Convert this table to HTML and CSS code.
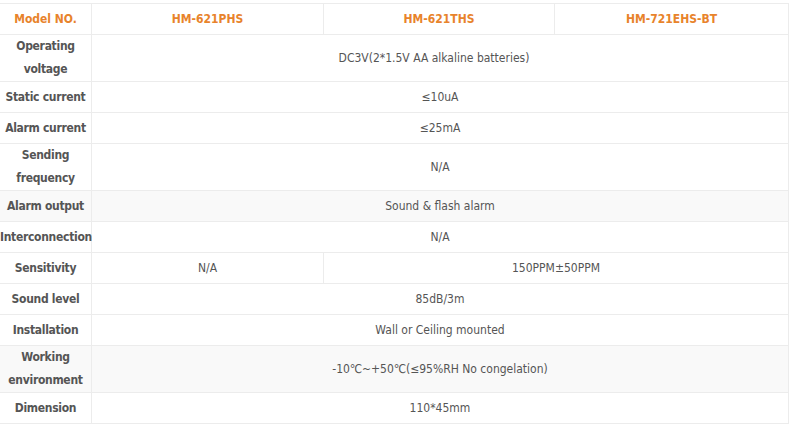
FILE: index.html
```html
<!DOCTYPE html>
<html>
<head>
<meta charset="utf-8">
<link rel="stylesheet" href="styles.css">
</head>
<body>
<div class="wrap">
<table class="spec">
  <colgroup>
    <col class="c1"><col class="c2"><col class="c3"><col class="c4">
  </colgroup>
  <tr class="head">
    <td>Model NO.</td><td>HM-621PHS</td><td>HM-621THS</td><td>HM-721EHS-BT</td>
  </tr>
  <tr><th>Operating<br>voltage</th><td colspan="3"><span class="trail">DC3V(2*1.5V AA alkaline batteries)</span></td></tr>
  <tr><th>Static current</th><td colspan="3">≤10uA</td></tr>
  <tr><th>Alarm current</th><td colspan="3">≤25mA</td></tr>
  <tr><th>Sending<br>frequency</th><td colspan="3">N/A</td></tr>
  <tr class="alt"><th>Alarm output</th><td colspan="3">Sound &amp; flash alarm</td></tr>
  <tr><th>Interconnection</th><td colspan="3">N/A</td></tr>
  <tr><th>Sensitivity</th><td>N/A</td><td colspan="2">150PPM±50PPM</td></tr>
  <tr><th>Sound level</th><td colspan="3">85dB/3m</td></tr>
  <tr><th>Installation</th><td colspan="3">Wall or Ceiling mounted</td></tr>
  <tr class="alt"><th>Working<br>environment</th><td colspan="3">-10℃~+50℃(≤95%RH No congelation)</td></tr>
  <tr><th>Dimension</th><td colspan="3">110*45mm</td></tr>
</table>
</div>
</body>
</html>
```
FILE: styles.css
```css
html, body {
  margin: 0;
  padding: 0;
  background: #fff;
}
.wrap {
  width: 800px;
  height: 424px;
  overflow: hidden;
  padding-top: 3px;
  box-sizing: border-box;
}
.spec {
  border-collapse: collapse;
  table-layout: fixed;
  width: 789px;
  margin-left: -1px;
  font-family: "DejaVu Sans Condensed", "DejaVu Sans", sans-serif;
  font-size: 12px;
  color: #555;
}
.c1 { width: 92px; }
.c2 { width: 232px; }
.c3 { width: 231px; }
.c4 { width: 234px; }
.spec td, .spec th {
  border: 1px solid #ececec;
  height: 30px;
  padding: 0;
  line-height: 23px;
  text-align: center;
  vertical-align: middle;
  white-space: nowrap;
}
.spec th {
  font-weight: bold;
  color: #555;
  letter-spacing: -0.3px;
}
.head td {
  color: #e8832b;
  font-weight: bold;
}
.trail {
  padding-right: 12px;
}
.alt th, .alt td {
  background: #f9f9f9;
}
```
